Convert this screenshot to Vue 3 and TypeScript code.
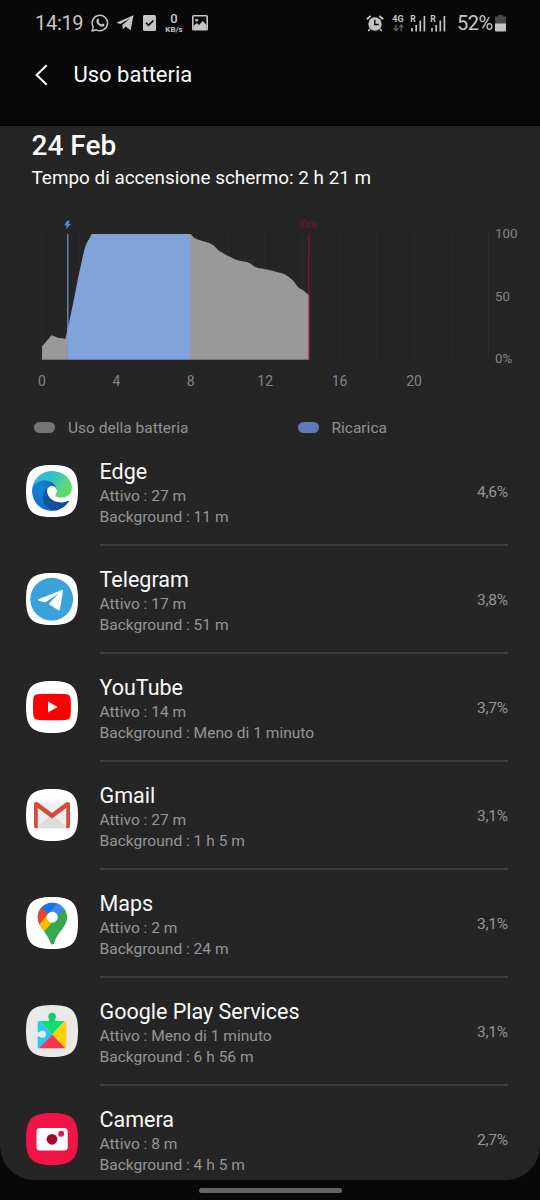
<script setup lang="ts">
interface AppUsage {
    id: string
    name: string
    active: string
    background: string
    percent: string
}

const apps: AppUsage[] = [
    { id: 'edge', name: 'Edge', active: '27 m', background: '11 m', percent: '4,6%' },
    { id: 'telegram', name: 'Telegram', active: '17 m', background: '51 m', percent: '3,8%' },
    { id: 'youtube', name: 'YouTube', active: '14 m', background: 'Meno di 1 minuto', percent: '3,7%' },
    { id: 'gmail', name: 'Gmail', active: '27 m', background: '1 h 5 m', percent: '3,1%' },
    { id: 'maps', name: 'Maps', active: '2 m', background: '24 m', percent: '3,1%' },
    { id: 'services', name: 'Google Play Services', active: 'Meno di 1 minuto', background: '6 h 56 m', percent: '3,1%' },
    { id: 'camera', name: 'Camera', active: '8 m', background: '4 h 5 m', percent: '2,7%' }
]

const tiles: Record<string, string> = {
    services: '#e9e9e9',
    camera: '#f01546'
}

const hourX = (hour: number) => 42 + hour * 18.6

const gridHours = Array.from({ length: 13 }, (_, i) => i * 2)
const labelHours = [0, 4, 8, 12, 16, 20]
</script>

<template>
<div class='Screen'>
    <div class='StatusBar'>
        <span class='Clock'>14:19</span>
        <svg class='WhatsApp' width='18' height='18' viewBox='0 0 18 18'>
            <path d='M1.1 17 2.2 12.9A7.7 7.7 0 1 1 5.2 15.8Z' fill='none' stroke='#c4c4c4' stroke-width='1.5' stroke-linejoin='round' />
            <path d='M6.3 4.9c.5-.5 1.1-.4 1.3.1l.6 1.5c.1.4-.5 1-.7 1.2.6 1.3 1.6 2.2 2.9 2.8.4-.3.8-1.1 1.2-1l1.6.8c.4.2.2 1.2-.3 1.6-1.7 1.5-4.3.1-5.9-1.5C5.3 8.7 4.7 6.5 6.3 4.9Z' fill='#c4c4c4' />
        </svg>
        <svg class='Plane' width='18' height='16' viewBox='0 0 18 16'>
            <path d='M.3 7.8 17.5.3 14.7 15.3 9.5 11.6 6.9 14.3 6.3 9.9 14.3 3 4.4 9Z' fill='#c4c4c4' />
        </svg>
        <svg class='Check' width='13' height='16' viewBox='0 0 13 16'>
            <rect width='13' height='16' rx='1.5' fill='#c4c4c4' />
            <path d='m3 7.7 2.6 2.6L10.4 5.5' fill='none' stroke='#080808' stroke-width='1.7' />
        </svg>
        <div class='Speed'>
            <b>0</b>
            <span>KB/s</span>
        </div>
        <svg class='Picture' width='16' height='16' viewBox='0 0 16 16'>
            <rect x='.8' y='.8' width='14.4' height='14' rx='.8' fill='none' stroke='#c4c4c4' stroke-width='1.6' />
            <circle cx='4.7' cy='5.2' r='1.4' fill='#c4c4c4' />
            <path d='M1.5 14.4V11L4.8 8l2.3 1.9L10.6 6l4 4v4.4Z' fill='#c4c4c4' />
        </svg>
        <div class='Spacer'></div>
        <svg class='Alarm' width='18' height='17' viewBox='0 0 18 17'>
            <g fill='none' stroke='#c4c4c4' stroke-width='2'>
                <path d='M.9 4.2 4.6 1.1M13.4 1.1 17.1 4.2' />
                <path d='m4.2 14-2 2M13.8 14l2 2' stroke-width='1.7' />
            </g>
            <circle cx='9' cy='9' r='6.7' fill='#c4c4c4' />
            <path d='M8.8 4.8v4.7h4' fill='none' stroke='#080808' stroke-width='1.4' />
        </svg>
        <div class='Network'>
            <b>4G</b>
            <svg width='11' height='8' viewBox='0 0 11 8'>
                <path d='M3 .5v6M.8 4.3 3 6.7l2.2-2.4M8.2 7.2v-6M6 3.4 8.2 1l2.2 2.4' fill='none' stroke='#626262' stroke-width='1.3' />
            </svg>
        </div>
        <svg v-for='sim in 2' :key='sim' class='Signal' width='16' height='17' viewBox='0 0 16 17'>
            <text x='.3' y='7' font-size='8.5' font-weight='700' fill='#c4c4c4'>R</text>
            <path d='M2 16.5v-3.5M6.2 16.5v-6.5M10.3 16.5V5.5M14.4 16.5V1' fill='none' stroke='#c4c4c4' stroke-width='1.7' />
        </svg>
        <span class='Level'>52%</span>
        <svg class='Battery' width='11' height='17' viewBox='0 0 11 17'>
            <path d='M3 1.5V0h5v1.5h2A1 1 0 0 1 11 2.5V9H0V2.5a1 1 0 0 1 1-1Z' fill='#484848' />
            <path d='M0 8.5h11V15.5a1 1 0 0 1-1 1H1a1 1 0 0 1-1-1Z' fill='#c4c4c4' />
        </svg>
    </div>

    <div class='Header'>
        <svg width='14' height='22' viewBox='0 0 14 22'>
            <path d='M12.7 1.3 2.7 11 12.7 20.7' fill='none' stroke='#fafafa' stroke-width='2.1' />
        </svg>
        <span>Uso batteria</span>
    </div>

    <div class='Panel'>
        <div class='Date'>24 Feb</div>
        <div class='ScreenTime'>Tempo di accensione schermo: 2 h 21 m</div>

        <svg class='Chart' width='540' height='190' viewBox='0 0 540 190'>
            <path
                v-for='hour in gridHours'
                :key='hour'
                :d='`M${hourX(hour)} 23V149.5`'
                stroke='#2e2e2e'
            />
            <path d='M42 149.5V136.5L51.5 125.3 58 127.8 65.5 128.8 67.5 120V149.5Z' fill='#999999' />
            <path d='M190 149.5V24C192 24 192 27 195 28.2C200 31 209 32 213 35C216 37 217 40 221 42C226 45 232 48 237 50C244 52 248 51 253 55.5C257 58.5 261 58 267 59.5L282 63.3C287 65 290 68 293.5 71C296 74 297 77 300 78.5C304 80.5 306 83 309 85V149.5Z' fill='#999999' />
            <path d='M67.8 24V149' stroke='#6580b4' stroke-width='1.5' />
            <path d='M67.3 149.5V122L65.5 129L68.5 115L73 94L78.5 66L84 41C86 33 88 31 90 27.5L91.5 24H190.3V149.5Z' fill='#82a3da' />
            <path d='M42 149.2H67.3M190.3 149.2H308' stroke='#808080' />
            <path d='M67.3 149.2H190.3' stroke='#6f8dc2' />
            <path d='M308.7 24V84.5' stroke='#79152a' stroke-width='1.5' />
            <path d='M308.8 84.5V149.5' stroke='#a83c50' stroke-width='1.3' />
            <path d='M67 10.8 64.3 15.5H66.8L66 19.2 71.2 13.8H68.5L70 10.8Z' fill='#5b85cd' />
            <text class='Now' x='308.5' y='17.5'>Ora</text>
            <text v-for='hour in labelHours' :key='hour' class='Hour' :x='hourX(hour)' y='176'>{{ hour }}</text>
            <text class='Scale' x='495' y='28.3'>100</text>
            <text class='Scale' x='495' y='90.8'>50</text>
            <text class='Scale' x='495' y='153.3'>0%</text>
        </svg>

        <div class='Legend'>
            <div class='Entry'><i class='Usage'></i>Uso della batteria</div>
            <div class='Entry'><i class='Charge'></i>Ricarica</div>
        </div>

        <div v-for='app in apps' :key='app.id' class='App'>
            <svg class='Icon' width='52' height='52' viewBox='0 0 52 52'>
                <path d='M26 0C46 0 52 6 52 26S46 52 26 52 0 46 0 26 6 0 26 0Z' :fill='tiles[app.id] ?? "#ffffff"' />
                <g v-if='app.id === "edge"' transform='translate(6 6) scale(.156)'>
                    <defs>
                        <linearGradient id='edgeDark' x1='0' x2='1' y1='.5' y2='.5'>
                            <stop offset='0' stop-color='#0c59a4' />
                            <stop offset='1' stop-color='#114a8b' />
                        </linearGradient>
                        <linearGradient id='edgeBlue' x1='.8' x2='.3' y1='.1' y2='1'>
                            <stop offset='0' stop-color='#1765b4' />
                            <stop offset='.35' stop-color='#1484d4' />
                            <stop offset='1' stop-color='#0c6fce' />
                        </linearGradient>
                        <linearGradient id='edgeGreen' x1='0' x2='1' y1='.3' y2='.7'>
                            <stop offset='0' stop-color='#32b4e2' />
                            <stop offset='.45' stop-color='#31c4c5' />
                            <stop offset='.75' stop-color='#5bd57d' />
                            <stop offset='1' stop-color='#5edb62' />
                        </linearGradient>
                    </defs>
                    <path d='M231.07 190.54c-3.4 1.77-6.92 3.34-10.54 4.7a101.9 101.9 0 0 1-35.9 6.47c-47.32 0-88.54-32.55-88.54-74.32a31.48 31.48 0 0 1 16.43-27.31c-42.8 1.8-53.8 46.4-53.8 72.53 0 73.88 68.09 81.37 82.76 81.37 7.91 0 19.84-2.3 27-4.56l1.31-.44a128.34 128.34 0 0 0 66.6-52.8 4 4 0 0 0-5.32-5.64z' fill='url(#edgeDark)' />
                    <path d='M105.73 241.42a79.2 79.2 0 0 1-22.74-21.34 80.72 80.72 0 0 1 29.53-120c3.12-1.47 8.45-4.13 15.54-4a32.35 32.35 0 0 1 25.69 13 31.88 31.88 0 0 1 6.36 18.66c0-.21 24.46-79.6-80-79.6-43.9 0-80 41.66-80 78.21a130.15 130.15 0 0 0 12.11 56 128 128 0 0 0 156.38 67.11 75.55 75.55 0 0 1-62.78-8z' fill='url(#edgeBlue)' />
                    <path d='M152.33 148.86c-.81 1.05-3.3 2.5-3.3 5.66 0 2.61 1.7 5.12 4.72 7.23 14.38 10 41.49 8.68 41.56 8.68a59.56 59.56 0 0 0 30.27-8.35 61.38 61.38 0 0 0 30.43-52.88c.26-22.41-8-37.31-11.34-43.91C223.46 23.85 177.72 0 128 0A128 128 0 0 0 0 126.2c.48-36.54 36.8-66.05 80-66.05 3.5 0 23.46.34 42 10.07 16.34 8.58 24.9 18.94 30.85 29.21 6.18 10.67 7.28 24.15 7.28 29.52 0 5.37-2.74 13.33-7.8 19.91z' fill='url(#edgeGreen)' />
                </g>
                <g v-else-if='app.id === "telegram"'>
                    <circle cx='25.7' cy='26.2' r='21.4' fill='#3aa2da' />
                    <path d='M12.3 26.3 36 17Q37.3 16.6 37 18.2L34 36.3Q33.6 38.1 32 37.1L23.4 31.6Q22.7 31 23.4 30.2L32.5 20.6 20.3 28.7Q18.8 29.7 17.2 29.1L12.4 27.5Q11.2 26.9 12.3 26.3Z' fill='#ffffff' />
                </g>
                <g v-else-if='app.id === "youtube"'>
                    <path d='M13 13.1Q26 12.3 39 13.1C43.5 13.4 44.4 15 44.7 19Q45.1 26 44.7 33C44.4 37 43.5 38.6 39 38.9Q26 39.7 13 38.9C8.5 38.6 7.5 37 7.2 33Q6.8 26 7.2 19C7.5 15 8.5 13.4 13 13.1Z' fill='#ff0000' />
                    <path d='M22 20.4 31.6 26 22 31.6Z' fill='#ffffff' />
                </g>
                <g v-else-if='app.id === "gmail"'>
                    <rect x='8' y='13' width='36' height='26.2' rx='2' fill='#ececec' />
                    <path d='M10 39.2 26 25.5 42 39.2Z' fill='#dcdcdc' />
                    <path d='M11 13H41L26 25Z' fill='#f0f0f0' />
                    <path d='M12 38 26 29 11 17M40 38 26 29 41 17' fill='none' stroke='#d5d5d5' stroke-width='.7' />
                    <path d='M8 15.2C8 12.7 10.6 12.4 12 13.6L26 24 40 13.6C41.4 12.4 44 12.7 44 15.2V37.2A2 2 0 0 1 42 39.2H40.2V19L26 29.5 11.8 19V39.2H10A2 2 0 0 1 8 37.2Z' fill='#d54b3d' />
                </g>
                <g v-else-if='app.id === "maps"'>
                    <clipPath id='pin'>
                        <path d='M26.3 5.8C18 5.8 11.7 12.3 11.7 20.2C11.7 30 21.5 35 24.5 45.8C25.1 48 27.4 48 28 45.8C31 35 40.9 30 40.9 20.2C40.9 12.3 34.6 5.8 26.3 5.8Z' />
                    </clipPath>
                    <g clip-path='url(#pin)'>
                        <rect x='10' y='4' width='32' height='45' fill='#34a853' />
                        <path d='M14.5 10 26.3 20.3 40.9 3H10V6Z' fill='#1a73e8' />
                        <path d='M15 11.2 22.5 17.3 12 30H8V8Z' fill='#ea4335' />
                        <path d='M21.5 17.5 12 29 17.5 35.5 32.5 18.5Z' fill='#fbbc04' />
                        <path d='M22 17.2 32 5.5 45 3V11L38.7 10.8 29.5 21.5Z' fill='#4285f4' />
                        <path d='M38.9 10.7 17.5 35.5 28 50 44 30V8Z' fill='#34a853' />
                    </g>
                    <circle cx='26.3' cy='20.2' r='5.5' fill='#ffffff' />
                </g>
                <g v-else-if='app.id === "services"'>
                    <path d='M13.5 15.9H38.6L26.2 29.5Z' fill='#12dd72' />
                    <circle cx='26.1' cy='11.5' r='3.8' fill='#12cf6c' />
                    <path d='M23.6 12H28.6L29.3 17H22.9Z' fill='#12cf6c' />
                    <path d='M13.3 15.9 26.2 29.5 13.3 43.3A1.6 1.6 0 0 1 11.7 41.7V17.5A1.6 1.6 0 0 1 13.3 15.9Z' fill='#24c8f4' />
                    <path d='M39 15.9A1.6 1.6 0 0 1 40.3 17.5V41.7A1.6 1.6 0 0 1 39 43.2L26.2 29.5Z' fill='#fdd009' />
                    <path d='M13 43.3 26.2 29.5 39.2 43.3Z' fill='#f3364b' />
                    <circle cx='16.3' cy='29.2' r='3.6' fill='#e9e9e9' />
                    <path d='M11 26.9 16 27.6V30.8L11 31.5Z' fill='#e9e9e9' />
                </g>
                <g v-else>
                    <rect x='10.5' y='15' width='31.2' height='22.6' rx='3.6' fill='#ffffff' />
                    <circle cx='26' cy='26.3' r='5.4' fill='#a10b2b' />
                    <circle cx='35.2' cy='20.8' r='3' fill='#d6214c' />
                </g>
            </svg>
            <div class='Details'>
                <div class='Text'>
                    <div class='Name'>{{ app.name }}</div>
                    <div class='Time'>Attivo : {{ app.active }}</div>
                    <div class='Time'>Background : {{ app.background }}</div>
                </div>
                <div class='Percent'>{{ app.percent }}</div>
            </div>
        </div>
    </div>

    <div class='NavBar'>
        <div class='Handle'></div>
    </div>
</div>
</template>

<style>
body {
    margin: 0;
    background-color: #080808;
}
</style>

<style scoped>
.Screen {
    display: flex;
    flex-direction: column;
    width: 540px;
    height: 1200px;
    overflow: hidden;

    font-family: Roboto, sans-serif;
    color: #fafafa;
    background-color: #080808;
}

.StatusBar {
    display: flex;
    align-items: center;
    box-sizing: border-box;
    height: 46px;
    padding-left: 35px;
    padding-right: 34px;

    color: #c4c4c4;
}

.Clock {
    width: 48px;
    font-size: 20px;
    letter-spacing: -.3px;
}

.WhatsApp {
    margin-left: 7.5px;
}

.Plane {
    margin-left: 7px;
}

.Check {
    margin-left: 9.5px;
}

.Speed {
    display: flex;
    flex-direction: column;
    align-items: center;
    width: 20px;
    margin-left: 8px;

    font-size: 8px;
    font-weight: 700;
    line-height: 8px;
}

.Speed b {
    font-size: 13px;
    font-weight: 500;
    line-height: 14px;
}

.Picture {
    margin-left: 7.5px;
}

.Spacer {
    flex: 1;
}

.Network {
    display: flex;
    flex-direction: column;
    align-items: center;
    width: 12px;
    margin-left: 8px;
    margin-right: 6px;

    font-size: 9px;
    line-height: 9px;
}

.Signal {
    margin-right: 4px;
    overflow: visible;
}

.Level {
    width: 36px;
    margin-left: 7px;
    font-size: 20px;
    letter-spacing: -.5px;
}

.Battery {
    margin-left: 2px;
}

.Header {
    display: flex;
    align-items: center;
    height: 57px;
    padding-left: 34px;
    margin-bottom: 23px;

    font-size: 22px;
}

.Header span {
    margin-left: 25.5px;
}

.Panel {
    height: 1054px;
    overflow: hidden;

    background-color: #252525;
    border-radius: 0 0 34px 34px;
}

.Date {
    padding-left: 31.5px;
    padding-top: 4px;

    font-size: 28px;
    font-weight: 500;
    line-height: 32px;
}

.ScreenTime {
    padding-top: 1px;
    padding-left: 31.5px;

    font-size: 18.9px;
    line-height: 30px;
}

.Chart {
    display: block;
    margin-top: 17px;
}

.Now {
    font-size: 10.5px;
    text-anchor: middle;
    fill: #79152a;
}

.Hour {
    font-size: 14px;
    text-anchor: middle;
    fill: #858585;
}

.Scale {
    font-size: 13.3px;
    fill: #858585;
}

.Legend {
    display: flex;
    height: 37px;
    padding-left: 34px;

    font-size: 15.5px;
    color: #929292;
}

.Entry {
    display: flex;
    flex: none;
    align-items: center;
    width: 263.5px;
    height: 55px;
}

.Entry i {
    width: 21px;
    height: 11px;
    margin-right: 13px;
    border-radius: 6px;
}

.Usage {
    background-color: #747474;
}

.Charge {
    background-color: #5b7cb6;
}

.App {
    display: flex;
    height: 108px;
    padding-left: 26px;
    padding-right: 32px;
}

.Icon {
    flex: none;
    margin-top: 28px;
}

.Details {
    display: flex;
    flex: 1;
    justify-content: space-between;
    box-sizing: border-box;
    height: 109px;
    margin-left: 21.5px;
    border-bottom: 2px solid #3c3c3c;
}

.App:last-child .Details {
    border-bottom: none;
}

.Text {
    padding-top: 20px;
}

.Name {
    font-size: 21.5px;
    line-height: 29px;
}

.Time {
    font-size: 15.55px;
    line-height: 21px;
    color: #969696;
}

.Percent {
    font-size: 15.5px;
    letter-spacing: -.2px;
    line-height: 111px;
    color: #969696;
}

.NavBar {
    display: flex;
    justify-content: center;
    height: 20px;
}

.Handle {
    width: 143px;
    height: 5px;
    margin-top: 8px;

    background-color: #656565;
    border-radius: 3px;
}
</style>
